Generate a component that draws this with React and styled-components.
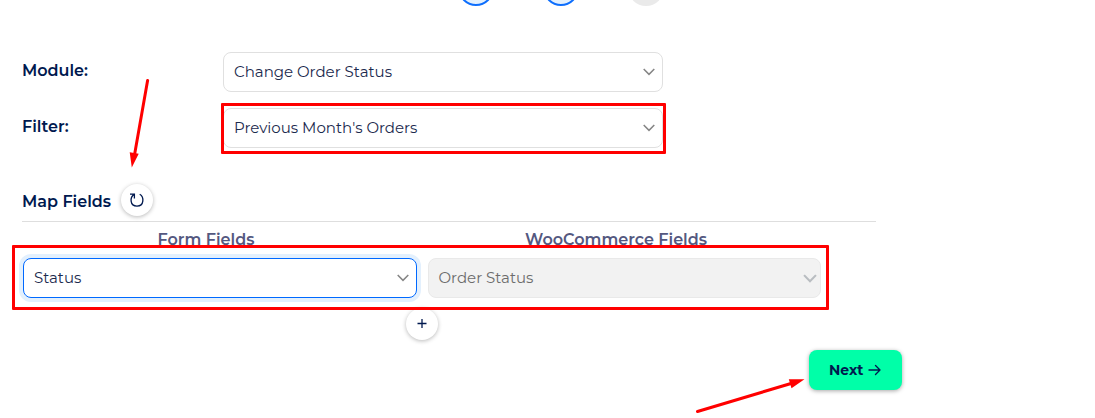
import React from "react";
import styled, { createGlobalStyle } from "styled-components";

const Global = createGlobalStyle`
  * { box-sizing: border-box; }
  body { margin: 0; background: #fff; color: #00194f; font-family: Montserrat, Inter, "Liberation Sans", sans-serif; }
`;
const Page = styled.main`
  position: relative;
  width: 1095px;
  height: 418px;
  padding-left: 22px;
  overflow: hidden;
`;
const Steps = styled.div`
  display: flex;
  gap: 49px;
  height: 52px;
  padding-left: 435.5px;
`;
const Step = styled.span`
  width: 36px;
  height: 36px;
  margin-top: -30px;
  border-radius: 50%;
  background: ${(p) => (p.$active ? "#e3f0fd" : "#eaeaea")};
  border: ${(p) => (p.$active ? "2px solid #0d6efd" : "none")};
`;
const Row = styled.div`
  display: flex;
  margin-bottom: 16px;
`;
const Label = styled.label`
  width: 201px;
  padding-top: 9px;
  font-size: 16px;
  line-height: 20px;
  font-weight: 600;
`;
const Select = styled.div`
  display: flex;
  align-items: center;
  justify-content: space-between;
  width: ${(p) => p.$width}px;
  height: 40px;
  padding: 0 ${(p) => (p.$disabled ? 3 : 7)}px 0 ${(p) => (p.$disabled ? 9.5 : 10)}px;
  border: 1px solid ${(p) => (p.$focused ? "#0069ff" : p.$disabled ? "#e9e9e9" : "#e0e0e0")};
  border-radius: 8px;
  background: ${(p) => (p.$disabled ? "#f2f2f2" : "#fff")};
  box-shadow: ${(p) => (p.$focused ? "0 0 0 4px #e3f0fd" : "none")};
  color: ${(p) => (p.$disabled ? "#6c6c6c" : "#1b2a4e")};
  font-size: 15px;
  font-weight: 400;
`;
const Value = styled.span`
  padding-bottom: 2px;
  white-space: nowrap;
`;
const SectionTitle = styled.div`
  display: flex;
  align-items: center;
  height: 32px;
  margin-top: 36px;
  font-size: 16px;
  font-weight: 600;
`;
const TitleText = styled.div`
  width: 99px;
  padding-top: 2px;
`;
const RoundButton = styled.button`
  display: grid;
  place-items: center;
  width: 32px;
  height: 32px;
  padding: 0;
  border: 0;
  border-radius: 50%;
  background: #fff;
  color: #00194f;
  box-shadow: 0 1px 4px rgba(0, 0, 0, 0.28);
`;
const Divider = styled.div`
  width: 854px;
  height: 1px;
  margin-top: 5px;
  background: #dedede;
`;
const Columns = styled.div`
  display: grid;
  grid-template-columns: 394px 393px;
  column-gap: 11px;
  padding-left: 1px;
`;
const ColumnHeading = styled.div`
  height: 36px;
  padding: 8px ${(p) => p.$shift}px 0 0;
  text-align: center;
  font-size: 16px;
  line-height: 20px;
  font-weight: 600;
  color: #54587f;
`;
const AddRow = styled.div`
  padding: 10px 0 10px 384px;
`;
const Next = styled.button`
  display: flex;
  align-items: center;
  gap: 5px;
  width: 93px;
  height: 40px;
  margin-left: 787px;
  padding: 0 0 0 20px;
  border: 0;
  border-radius: 8px;
  background: #00ffa8;
  color: #00194f;
  box-shadow: 0 1px 4px rgba(0, 0, 0, 0.35);
  font: 700 14px Montserrat, Inter, sans-serif;
`;
const Highlight = styled.div`
  position: absolute;
  left: ${(p) => p.$x}px;
  top: ${(p) => p.$y}px;
  width: ${(p) => p.$w}px;
  height: ${(p) => p.$h}px;
  border: 3px solid #f00;
  border-radius: 1px;
`;
const Pointers = styled.svg`
  position: absolute;
  left: 0;
  top: 0;
  pointer-events: none;
`;

const Chevron = ({ muted }) => (
  <svg width={muted ? 14 : 12} height={muted ? 9 : 8} viewBox="0 0 12 8" fill="none">
    <path d="M.7 1 6 6.4 11.3 1" stroke={muted ? "#b9bdc1" : "#858585"} strokeWidth={muted ? 1.9 : 1.5} />
  </svg>
);

const Field = ({ children, ...rest }) => (
  <Select {...rest}>
    <Value>{children}</Value>
    <Chevron muted={rest.$disabled} />
  </Select>
);

export default function App() {
  return (
    <>
      <Global />
      <Page>
        <Steps>
          <Step $active />
          <Step $active />
          <Step />
        </Steps>
        <Row>
          <Label>Module:</Label>
          <Field $width={440}>Change Order Status</Field>
        </Row>
        <Row>
          <Label>Filter:</Label>
          <Field $width={440}>Previous Month's Orders</Field>
        </Row>
        <SectionTitle>
          <TitleText>Map Fields</TitleText>
          <RoundButton aria-label="Refresh fields">
            <svg width="16" height="16" viewBox="0 0 16 16" fill="none" stroke="currentColor" strokeWidth="1.3">
              <path d="M1 2.1H5.4V6.5M5.4 2.3C.6 4.8.6 14.1 8 14.1S15.2 4.8 10.7 2.3" />
            </svg>
          </RoundButton>
        </SectionTitle>
        <Divider />
        <Columns>
          <ColumnHeading $shift={28}>Form Fields</ColumnHeading>
          <ColumnHeading $shift={17}>WooCommerce Fields</ColumnHeading>
          <Field $width={394} $focused>Status</Field>
          <Field $width={393} $disabled>Order Status</Field>
        </Columns>
        <AddRow>
          <RoundButton aria-label="Add field">
            <svg width="10" height="10" viewBox="0 0 10 10" stroke="currentColor" strokeWidth="1.3">
              <path d="M.5 4.5H9.5M5 0V9" />
            </svg>
          </RoundButton>
        </AddRow>
        <Next>
          Next
          <svg width="13" height="12" viewBox="0 0 13 12" fill="none" stroke="currentColor" strokeWidth="1.4" strokeLinecap="round" strokeLinejoin="round">
            <path d="M1 6H12M7.5 1.5 12 6 7.5 10.5" />
          </svg>
        </Next>
        <Highlight $x={221} $y={103} $w={445} $h={51} />
        <Highlight $x={12} $y={245} $w={817} $h={65} />
        <Pointers width="1095" height="418" fill="#f00" stroke="#f00">
          <path d="M147.6 80.5 134.5 155M697.5 411.5 791 383.5" strokeWidth="3" strokeLinecap="round" />
          <path d="M129.7 152.3 138.7 153.8 131.8 167.5ZM788.8 379.3H804.5L791.5 388.3Z" stroke="none" />
        </Pointers>
      </Page>
    </>
  );
}
